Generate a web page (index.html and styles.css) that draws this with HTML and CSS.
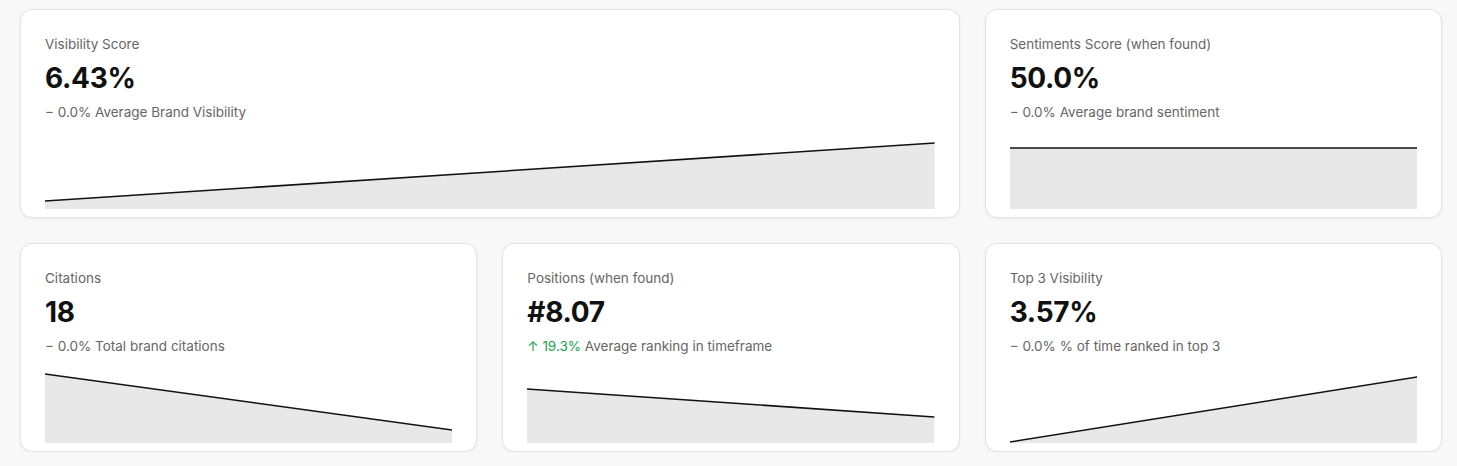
FILE: index.html
```html
<!DOCTYPE html>
<html>
<head>
<meta charset="utf-8">
<link rel="stylesheet" href="styles.css">
</head>
<body>
<div class="grid">
  <div class="card span2">
    <div class="title">Visibility Score</div>
    <div class="value">6.43%</div>
    <div class="sub"><span class="delta">− 0.0%</span> Average Brand Visibility</div>
    <svg class="chart" viewBox="0 0 100 70" preserveAspectRatio="none">
      <polygon class="area" points="0,62 100,4 100,70 0,70"/>
      <polyline class="line" points="0,62 100,4"/>
    </svg>
  </div>
  <div class="card">
    <div class="title">Sentiments Score (when found)</div>
    <div class="value">50.0%</div>
    <div class="sub"><span class="delta">− 0.0%</span> Average brand sentiment</div>
    <svg class="chart" viewBox="0 0 100 70" preserveAspectRatio="none">
      <polygon class="area" points="0,9 100,9 100,70 0,70"/>
      <polyline class="line" points="0,9 100,9"/>
    </svg>
  </div>
  <div class="card">
    <div class="title">Citations</div>
    <div class="value">18</div>
    <div class="sub"><span class="delta">− 0.0%</span> Total brand citations</div>
    <svg class="chart" viewBox="0 0 100 70" preserveAspectRatio="none">
      <polygon class="area" points="0,1 100,57 100,70 0,70"/>
      <polyline class="line" points="0,1 100,57"/>
    </svg>
  </div>
  <div class="card">
    <div class="title">Positions (when found)</div>
    <div class="value">#8.07</div>
    <div class="sub"><span class="delta up">↑ 19.3%</span> Average ranking in timeframe</div>
    <svg class="chart" viewBox="0 0 100 70" preserveAspectRatio="none">
      <polygon class="area" points="0,16 100,44 100,70 0,70"/>
      <polyline class="line" points="0,16 100,44"/>
    </svg>
  </div>
  <div class="card">
    <div class="title">Top 3 Visibility</div>
    <div class="value">3.57%</div>
    <div class="sub"><span class="delta">− 0.0%</span> % of time ranked in top 3</div>
    <svg class="chart" viewBox="0 0 100 70" preserveAspectRatio="none">
      <polygon class="area" points="0,70 100,4 100,70"/>
      <polyline class="line" points="0,69 100,4"/>
    </svg>
  </div>
</div>
</body>
</html>
```
FILE: styles.css
```css
html, body {
  margin: 0;
  padding: 0;
  background: #f8f8f8;
  font-family: Inter, "Noto Sans", "Liberation Sans", sans-serif;
}
.grid {
  display: grid;
  grid-template-columns: repeat(3, 1fr);
  column-gap: 25px;
  row-gap: 25px;
  padding: 9px 15px 0 20px;
}
.card {
  background: #fff;
  border: 1px solid #e3e3e3;
  border-radius: 12px;
  box-shadow: 0 1px 3px rgba(0,0,0,0.06);
  height: 209px;
  box-sizing: border-box;
  padding: 25px 24px 8px 24px;
  display: flex;
  flex-direction: column;
}
.span2 { grid-column: span 2; }
.title {
  font-size: 13.5px;
  color: #666;
  line-height: 18px;
}
.value {
  font-size: 28px;
  font-weight: 700;
  color: #111;
  line-height: 34px;
  margin-top: 8px;
  letter-spacing: -0.3px;
}
.sub {
  font-size: 13.5px;
  color: #666;
  line-height: 18px;
  margin-top: 8px;
}
.delta { color: #666; }
.delta.up { color: #16a34a; }
.chart {
  margin-top: auto;
  display: block;
  width: 100%;
  height: 70px;
}
.area { fill: #e8e8e8; }
.line {
  fill: none;
  stroke: #111;
  stroke-width: 1.6;
  vector-effect: non-scaling-stroke;
}
```
